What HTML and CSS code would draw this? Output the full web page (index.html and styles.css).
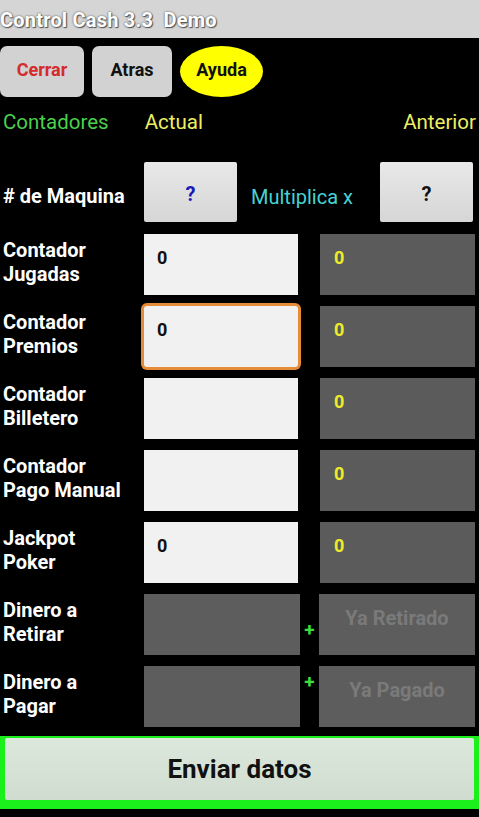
FILE: index.html
```html
<!DOCTYPE html>
<html lang="es">
<head>
    <meta charset="UTF-8">
    <meta name="viewport" content="width=device-width, initial-scale=1.0">
    <title>Control Cash 3.3 Demo</title>
    <link rel="stylesheet" href="styles.css">
</head>
<body>
    <header class="titlebar">Control Cash 3.3&nbsp; Demo</header>

    <nav class="toolbar">
        <button type="button" class="tool red">Cerrar</button>
        <button type="button" class="tool">Atras</button>
        <button type="button" class="tool help">Ayuda</button>
    </nav>

    <div class="heads">
        <span class="green">Contadores</span>
        <span class="yellow actual">Actual</span>
        <span class="yellow anterior">Anterior</span>
    </div>

    <div class="maquina">
        <span class="label">#&nbsp;de Maquina</span>
        <button type="button" class="ask blue">?</button>
        <span class="cyan">Multiplica x</span>
        <button type="button" class="ask">?</button>
    </div>

    <main class="rows">
        <div class="row">
            <label class="label">Contador<br>Jugadas</label>
            <div class="field">0</div>
            <div></div>
            <div class="prev">0</div>
        </div>
        <div class="row">
            <label class="label">Contador<br>Premios</label>
            <div class="field focus">0</div>
            <div></div>
            <div class="prev">0</div>
        </div>
        <div class="row">
            <label class="label">Contador<br>Billetero</label>
            <div class="field"></div>
            <div></div>
            <div class="prev">0</div>
        </div>
        <div class="row">
            <label class="label">Contador<br>Pago Manual</label>
            <div class="field"></div>
            <div></div>
            <div class="prev">0</div>
        </div>
        <div class="row">
            <label class="label">Jackpot<br>Poker</label>
            <div class="field">0</div>
            <div></div>
            <div class="prev">0</div>
        </div>
        <div class="row money">
            <label class="label">Dinero a<br>Retirar</label>
            <div class="dark"></div>
            <span class="plus low">+</span>
            <div class="dark hint">Ya Retirado</div>
        </div>
        <div class="row money">
            <label class="label">Dinero a<br>Pagar</label>
            <div class="dark"></div>
            <span class="plus">+</span>
            <div class="dark hint">Ya Pagado</div>
        </div>
    </main>

    <footer class="send">
        <button type="submit" class="send-btn">Enviar datos</button>
    </footer>
</body>
</html>
```

FILE: styles.css
```css
body {
    margin: 0;
    background-color: #000;
    font-family: Roboto, "Liberation Sans", sans-serif;
    color: #fff;
    width: 479px;
    height: 817px;
    overflow: hidden;
}
button {
    font-family: inherit;
    border: none;
    padding: 0;
    cursor: pointer;
}
.titlebar {
    height: 38px;
    line-height: 40px;
    background-color: #d5d5d5;
    color: #fff;
    font-size: 20px;
    font-weight: bold;
    letter-spacing: 0.2px;
    text-shadow: 0 0 2px #444, 1px 1px 1px #555;
    white-space: nowrap;
}
.toolbar {
    display: flex;
    gap: 8px;
    margin-top: 8px;
    height: 51px;
}
.tool {
    width: 84px;
    padding-bottom: 4px;
    border-radius: 7px;
    background-color: #d2d2d2;
    color: #111;
    font-size: 18px;
    font-weight: bold;
}
.tool + .tool {
    width: 80px;
}
.tool.red {
    color: #d42b2b;
}
.tool.help {
    width: 83px;
    border-radius: 50%;
    background-color: #ffff00;
}
.heads {
    display: flex;
    align-items: center;
    height: 28px;
    margin-top: 11px;
    font-size: 20.5px;
}
.heads .green {
    margin-left: 3px;
    color: #4ad04a;
}
.heads .actual {
    margin-left: 36px;
}
.heads .anterior {
    margin-left: auto;
    margin-right: 3px;
}
.yellow {
    color: #eeee62;
}
.maquina {
    display: grid;
    grid-template-columns: 144px 93px 143px 93px;
    align-items: center;
    height: 60px;
    margin-top: 26px;
}
.maquina .label {
    margin-top: 8px;
}
.ask {
    height: 60px;
    padding-top: 4px;
    background: linear-gradient(#e8e8e8, #d6d6d6);
    border-radius: 2px;
    color: #111;
    font-size: 20px;
    font-weight: bold;
}
.ask.blue {
    color: #1a1ab8;
}
.cyan {
    margin-left: 14px;
    margin-top: 10px;
    color: #48d2d2;
    font-size: 20px;
}
.label {
    padding-left: 3px;
    font-size: 20px;
    font-weight: bold;
    line-height: 24px;
    color: #fff;
}
.rows {
    display: flex;
    flex-direction: column;
    gap: 11px;
    margin-top: 12px;
}
.row {
    display: grid;
    grid-template-columns: 144px 154px 22px 155px;
    height: 61px;
}
.row .label {
    padding-top: 4px;
}
.field {
    background-color: #f1f1f1;
    color: #111;
    font-size: 18px;
    font-weight: bold;
    padding: 13px 0 0 13px;
}
.field.focus {
    border-radius: 3px;
    box-shadow: 0 0 0 3px #e48c38;
}
.prev {
    background-color: #5b5b5b;
    color: #ecec2a;
    font-size: 18px;
    font-weight: bold;
    padding: 13px 0 0 14px;
}
.row.money {
    grid-template-columns: 144px 156px 19px 156px;
}
.dark {
    background-color: #5d5d5d;
}
.hint {
    color: #7a7a7a;
    font-size: 20px;
    font-weight: bold;
    text-align: center;
    padding-top: 12px;
}
.plus {
    color: #3cdc3c;
    font-size: 19px;
    font-weight: bold;
    text-align: center;
    padding-top: 4px;
}
.plus.low {
    padding-top: 24px;
}
.send {
    margin-top: 9px;
    background-color: #1cf01c;
    height: 73px;
    padding: 2px 5px 0 5px;
    box-sizing: border-box;
}
.send-btn {
    width: 100%;
    height: 62px;
    border-radius: 2px;
    background: linear-gradient(#dce8dc, #cfdccf);
    color: #111;
    font-size: 26px;
    font-weight: bold;
}
```
